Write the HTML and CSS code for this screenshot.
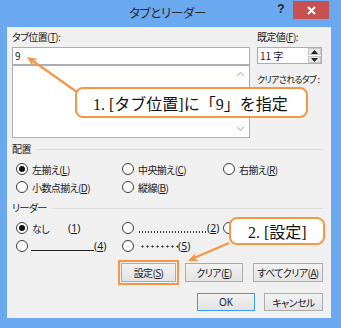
FILE: index.html
```html
<!DOCTYPE html>
<html lang="ja">
<head>
<meta charset="utf-8">
<title>タブとリーダー</title>
<link rel="stylesheet" href="styles.css">
</head>
<body>
<div class="window">
  <div class="titlebar">
    <div class="title">タブとリーダー</div>
    <div class="controls">
      <span class="help">?</span>
      <span class="close"><svg width="9" height="9" viewBox="0 0 9 9"><path d="M1 1L8 8M8 1L1 8" stroke="#fff" stroke-width="2"/></svg></span>
    </div>
  </div>
  <div class="client">
    <div class="top">
      <div class="col-left">
        <div class="label">タブ位置(<u>T</u>):</div>
        <div class="input">9</div>
        <div class="list">
          <div class="vscroll">
            <svg width="9" height="6" viewBox="0 0 9 6"><path d="M1 5L4.5 1.5L8 5" fill="none" stroke="#c2c2c2" stroke-width="1.2"/></svg>
            <svg width="9" height="6" viewBox="0 0 9 6"><path d="M1 1L4.5 4.5L8 1" fill="none" stroke="#c2c2c2" stroke-width="1.2"/></svg>
          </div>
        </div>
      </div>
      <div class="col-right">
        <div class="label">既定値(<u>F</u>):</div>
        <div class="spin">
          <span class="spin-val">11 字</span>
          <span class="spin-btns">
            <span class="spin-btn"><svg width="7" height="4" viewBox="0 0 7 4"><path d="M0 4L3.5 0L7 4Z" fill="#222"/></svg></span>
            <span class="spin-btn"><svg width="7" height="4" viewBox="0 0 7 4"><path d="M0 0L3.5 4L7 0Z" fill="#222"/></svg></span>
          </span>
        </div>
        <div class="label clear-label">クリアされるタブ :</div>
      </div>
    </div>

    <div class="group-head"><span>配置</span><span class="rule"></span></div>
    <div class="opts">
      <div class="opt"><span class="radio on"></span><span>左揃え(<u>L</u>)</span></div>
      <div class="opt"><span class="radio"></span><span>中央揃え(<u>C</u>)</span></div>
      <div class="opt"><span class="radio"></span><span>右揃え(<u>R</u>)</span></div>
      <div class="opt"><span class="radio"></span><span>小数点揃え(<u>D</u>)</span></div>
      <div class="opt"><span class="radio"></span><span>縦線(<u>B</u>)</span></div>
    </div>

    <div class="group-head lead-head"><span>リーダー</span><span class="rule"></span></div>
    <div class="opts">
      <div class="opt"><span class="radio on"></span><span class="none-lbl">なし</span><span class="num">(<u>1</u>)</span></div>
      <div class="opt"><span class="radio"></span><span class="dots"></span><span class="num">(<u>2</u>)</span></div>
      <div class="opt"><span class="radio"></span><span class="dash"></span></div>
      <div class="opt"><span class="radio"></span><span class="uline"></span><span class="num">(<u>4</u>)</span></div>
      <div class="opt"><span class="radio"></span><span class="mdots"></span><span class="num">(<u>5</u>)</span></div>
    </div>

    <div class="btnrow row1">
      <button class="btn btn-set">設定(<u>S</u>)</button>
      <button class="btn btn-clear">クリア(<u>E</u>)</button>
      <button class="btn btn-all">すべてクリア(<u>A</u>)</button>
    </div>
    <div class="btnrow row2">
      <button class="btn btn-ok">OK</button>
      <button class="btn btn-cancel">キャンセル</button>
    </div>
  </div>

  <svg class="arrows" width="341" height="328" viewBox="0 0 341 328">
    <line x1="77" y1="92" x2="33" y2="61" stroke="#f79646" stroke-width="2.2"/>
    <polygon points="27,57 37.8,59 32.7,61 32.6,66.4" fill="#f79646"/>
    <line x1="229" y1="243" x2="194" y2="258" stroke="#f79646" stroke-width="2.2"/>
    <polygon points="188,261 195.4,253 194.4,258.3 199,261.2" fill="#f79646"/>
  </svg>
  <div class="callout callout1">1. [タブ位置]に「9」を指定</div>
  <div class="callout callout2">2. [設定]</div>
</div>
</body>
</html>
```

FILE: styles.css
```css
* { box-sizing: border-box; }
html, body { margin: 0; padding: 0; }
body {
  width: 341px;
  height: 328px;
  overflow: hidden;
  font-family: "Noto Sans CJK JP", "Noto Sans", sans-serif;
  font-feature-settings: "palt";
  font-size: 10px;
  letter-spacing: -0.6px;
  color: #1a1a1a;
}
u { text-decoration-thickness: 1px; text-underline-offset: 1px; }

.window {
  position: relative;
  width: 341px;
  height: 328px;
  background: #6aa8ef;
}

.titlebar {
  height: 27px;
  display: grid;
}
.title, .controls { grid-area: 1 / 1; }
.title {
  justify-self: center;
  margin-left: -6px;
  line-height: 26px;
  font-size: 12.5px;
  letter-spacing: -0.3px;
  color: #2b2b2b;
}
.controls {
  justify-self: end;
  display: flex;
  align-items: flex-start;
  margin-right: 12px;
}
.help {
  width: 22px;
  text-align: center;
  font-family: "Liberation Sans", sans-serif;
  font-weight: bold;
  font-size: 12px;
  line-height: 18px;
  color: #222;
  margin-right: 1px;
  letter-spacing: 0;
}
.close {
  width: 36px;
  height: 18px;
  margin-top: 1px;
  background: #c75050;
  display: flex;
  align-items: center;
  justify-content: center;
}

.client {
  margin-left: 7px;
  width: 324px;
  height: 291px;
  background: #f0f0f0;
  padding: 3px 8px 0 5px;
}

.top {
  display: flex;
  gap: 7px;
}
.col-left { width: 238px; }
.col-right { width: 65px; }
.label {
  line-height: 14px;
  white-space: nowrap;
}
.input {
  margin-top: 3px;
  height: 18px;
  border: 1px solid #abadb3;
  background: #fff;
  padding-left: 2px;
  line-height: 15px;
}
.list {
  height: 73px;
  border: 1px solid #abadb3;
  background: #fff;
  display: flex;
  justify-content: flex-end;
}
.vscroll {
  width: 17px;
  display: flex;
  flex-direction: column;
  justify-content: space-between;
  align-items: center;
  padding: 5px 0 5px;
}

.spin {
  margin-top: 3px;
  height: 17px;
  border: 1px solid #abadb3;
  background: #fff;
  display: flex;
  justify-content: space-between;
}
.spin-val {
  padding-left: 2px;
  line-height: 15px;
  letter-spacing: 0;
}
.spin-btns {
  width: 13px;
  display: flex;
  flex-direction: column;
  gap: 1px;
}
.spin-btn {
  flex: 1;
  background: #e6e6e6;
  border: 1px solid #c8c8c8;
  display: flex;
  align-items: center;
  justify-content: center;
}
.clear-label {
  margin-top: 9px;
  font-size: 9px;
  letter-spacing: -0.7px;
}

.group-head {
  margin-top: 4px;
  display: flex;
  align-items: center;
  line-height: 14px;
}
.lead-head { margin-top: 5px; }
.rule {
  flex: 1;
  margin-left: 5px;
  border-top: 1px solid #dcdcdc;
}

.opts {
  margin-top: 4px;
  padding-left: 4px;
  display: grid;
  grid-template-columns: 106px 101px auto;
  grid-auto-rows: 18px;
}
.opt {
  display: flex;
  align-items: center;
  white-space: nowrap;
}
.radio {
  width: 12px;
  height: 12px;
  border: 1px solid #3c3c3c;
  border-radius: 50%;
  background: #fff;
  margin-right: 4px;
  flex: none;
  display: flex;
  align-items: center;
  justify-content: center;
}
.radio.on::after {
  content: "";
  width: 6px;
  height: 6px;
  border-radius: 50%;
  background: #111;
}
.none-lbl { width: 36px; }
.num {
  font-family: "Noto Sans", sans-serif;
  font-feature-settings: normal;
  letter-spacing: 0;
  font-size: 10.5px;
}
.dots {
  width: 68px;
  height: 2px;
  margin-top: 7px;
  margin-right: 1px;
  background-image: radial-gradient(circle, #333 0.7px, transparent 1px);
  background-size: 3px 2px;
}
.dash {
  width: 50px;
  border-bottom: 1px solid #222;
  margin-top: 6px;
}
.uline {
  width: 63px;
  border-bottom: 1px solid #222;
  margin-top: 9px;
  margin-left: -1px;
}
.mdots {
  width: 38px;
  height: 3px;
  margin-left: 2px;
  background-image: radial-gradient(circle, #333 0.9px, transparent 1.2px);
  background-size: 5px 3px;
}

.btnrow {
  display: flex;
  justify-content: flex-end;
}
.row1 { margin-top: 8px; gap: 9px; }
.row1 .btn-all { margin-left: 1px; }
.row2 { margin-top: 11px; gap: 9px; }
.btn {
  height: 19px;
  padding: 0;
  border: 1px solid #acacac;
  background: linear-gradient(#f2f2f2, #e3e3e3);
  font-family: inherit;
  font-feature-settings: "palt";
  font-size: 10px;
  letter-spacing: -0.6px;
  color: #1a1a1a;
  line-height: 15px;
  white-space: nowrap;
}
.btn-set {
  width: 55px;
  outline: 2px solid #f79646;
  outline-offset: 1px;
}
.btn-clear { width: 58px; }
.btn-all { width: 70px; }
.btn-ok {
  width: 58px;
  height: 18px;
  border-color: #3c9bea;
  font-family: "Noto Sans", sans-serif;
  letter-spacing: 0;
}
.btn-cancel { width: 59px; height: 18px; }

.arrows {
  position: absolute;
  left: 0;
  top: 0;
  pointer-events: none;
}
.callout {
  position: absolute;
  background: #fff;
  border: 2px solid #f79646;
  border-radius: 8px;
  font-family: "Liberation Serif", "Noto Sans CJK JP", serif;
  font-feature-settings: normal;
  font-size: 16px;
  letter-spacing: 0;
  color: #111;
  white-space: nowrap;
  display: flex;
  align-items: center;
}
.callout1 {
  left: 75px;
  top: 87px;
  width: 233px;
  height: 31px;
  padding-left: 16px;
}
.callout2 {
  left: 229px;
  top: 217px;
  width: 96px;
  height: 28px;
  padding-left: 17px;
}
```
